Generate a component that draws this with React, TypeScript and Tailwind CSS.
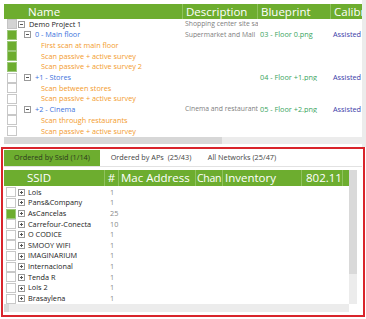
import React from 'react'

const GREEN = 'bg-[#6dad2f]'

type Row = {
  level: number
  check: 'gray' | 'green' | 'none'
  expander?: boolean
  name: string
  desc?: string
  blueprint?: string
  calib?: string
}

const rows: Row[] = [
  { level: 0, check: 'gray', expander: true, name: 'Demo Project 1', desc: 'Shopping center site sample' },
  { level: 1, check: 'green', expander: true, name: '0 - Main floor', desc: 'Supermarket and Mall', blueprint: '03 - Floor 0.png', calib: 'Assisted' },
  { level: 2, check: 'green', name: 'First scan at main floor' },
  { level: 2, check: 'green', name: 'Scan passive + active survey' },
  { level: 2, check: 'green', name: 'Scan passive + active survey 2' },
  { level: 1, check: 'none', expander: true, name: '+1 - Stores', blueprint: '04 - Floor +1.png', calib: 'Assisted' },
  { level: 2, check: 'none', name: 'Scan between stores' },
  { level: 2, check: 'none', name: 'Scan passive + active survey' },
  { level: 1, check: 'none', expander: true, name: '+2 - Cinema', desc: 'Cinema and restaurants', blueprint: '05 - Floor +2.png', calib: 'Assisted' },
  { level: 2, check: 'none', name: 'Scan through restaurants' },
  { level: 2, check: 'none', name: 'Scan passive + active survey' },
]

const networks = [
  { ssid: 'Lois', n: 1 },
  { ssid: 'Pans&Company', n: 1 },
  { ssid: 'AsCancelas', n: 25, on: true },
  { ssid: 'Carrefour-Conecta', n: 10 },
  { ssid: 'O CODICE', n: 1 },
  { ssid: 'SMOOY WIFI', n: 1 },
  { ssid: 'IMAGINARIUM', n: 1 },
  { ssid: 'Internacional', n: 1 },
  { ssid: 'Tenda R', n: 1 },
  { ssid: 'Lois 2', n: 1 },
  { ssid: 'Brasaylena', n: 1 },
]

function Check({ kind }: { kind: 'gray' | 'green' | 'none' }) {
  const fill = kind === 'green' ? 'bg-[#6dad2f] border-[#9cc87a]' : kind === 'gray' ? 'bg-[#d4d4d4] border-[#c4c4c4]' : 'bg-white border-[#c8c8c8]'
  return <div className={`w-[10px] h-[10px] border shrink-0 ${fill}`} />
}

function Expander({ open }: { open: boolean }) {
  return (
    <div className="w-[7px] h-[7px] border border-[#9a9a9a] bg-white relative shrink-0">
      <div className="absolute left-[1px] right-[1px] top-[2px] h-px bg-[#555]" />
      {!open && <div className="absolute top-[1px] bottom-[1px] left-[2px] w-px bg-[#555]" />}
    </div>
  )
}

function HeadCell({ w, children, className = '' }: { w: string; children?: React.ReactNode; className?: string }) {
  return (
    <div
      className={`${w} h-full border-r border-[#8fc25e] flex items-center text-white leading-none whitespace-nowrap overflow-hidden shrink-0 ${className}`}
    >
      {children}
    </div>
  )
}

export default function App() {
  return (
    <div className="w-[366px] h-[319px] bg-white overflow-hidden" style={{ fontFamily: '"Open Sans", "Noto Sans", sans-serif' }}>
      {/* project tree */}
      <div className="flex h-[147px]">
        <div className="w-[362px] pl-[4px] pt-[4px] flex flex-col">
          <div className={`flex h-[16px] ${GREEN} text-[11.5px]`}>
            <HeadCell w="w-[179px]" className="pl-[24px]">Name</HeadCell>
            <HeadCell w="w-[75px]" className="pl-[3px]">Description</HeadCell>
            <HeadCell w="w-[73px]" className="pl-[3px]">Blueprint</HeadCell>
            <HeadCell w="w-[31px]" className="pl-[3px] border-r-0">Calibr</HeadCell>
          </div>
          <div className="flex flex-col">
            {rows.map((r, i) => (
              <div key={i} className="flex h-[10.7px] items-center text-[7.3px] leading-none whitespace-nowrap">
                <div className="w-[179px] flex items-center shrink-0">
                  <div className="w-[3px]" />
                  <Check kind={r.check} />
                  <div style={{ width: 1 + r.level * 6 }} className="shrink-0" />
                  {r.expander ? <Expander open /> : <div className="w-[7px] shrink-0" />}
                  <span className={`ml-[4px] ${r.level === 0 ? 'text-[#222]' : r.level === 1 ? 'text-[#3d73dc]' : 'text-[#f39b2c]'}`}>
                    {r.name}
                  </span>
                </div>
                <div className="w-[75px] overflow-hidden pl-[2px] text-[6.8px] text-[#808080] shrink-0">{r.desc}</div>
                <div className="w-[73px] overflow-hidden pl-[2px] text-[#3aa561] shrink-0">{r.blueprint}</div>
                <div className="w-[31px] overflow-hidden pl-[2px] text-[#3b3ca8] shrink-0">{r.calib}</div>
              </div>
            ))}
          </div>
          <div className="mt-auto mb-[3px] h-[8px] bg-[#ececec] flex">
            <div className="w-[218px] h-full bg-[#d7d7d7]" />
          </div>
        </div>
        <div className="w-[4px] bg-[#ececec]" />
      </div>

      {/* networks panel */}
      <div className="mx-[1px] h-[170px] border-2 border-[#d9242b] flex flex-col pl-[1px]">
        <div className="flex h-[22px] items-stretch text-[7.3px] leading-none border-b border-[#e2e2e2] mr-[1px]">
          <div className={`w-[96px] ${GREEN} flex items-center justify-center text-[#2d3a1e] mt-[1px]`}>Ordered by Ssid (1/14)</div>
          <div className="w-[102px] flex items-center justify-center text-[#444]">Ordered by APs&nbsp;&nbsp;(25/43)</div>
          <div className="w-[80px] flex items-center justify-center text-[#444]">All Networks (25/47)</div>
        </div>
        <div className="flex mt-[3px] flex-1">
          <div className="w-[345px] flex flex-col">
            <div className={`flex h-[16px] ${GREEN} shrink-0 text-[11.5px]`}>
              <HeadCell w="w-[101px]" className="pl-[23px]">SSID</HeadCell>
              <HeadCell w="w-[14px]" className="justify-center">#</HeadCell>
              <HeadCell w="w-[77px]" className="pl-[2px]">Mac Address</HeadCell>
              <HeadCell w="w-[27px]" className="pl-[1px] text-[10.5px] tracking-[-0.3px]">Chan</HeadCell>
              <HeadCell w="w-[79px]" className="pl-[2px]">Inventory</HeadCell>
              <HeadCell w="w-[41px]" className="pl-[4px]">802.11</HeadCell>
              <HeadCell w="w-[6px]" className="border-r-0"></HeadCell>
            </div>
            <div className="flex flex-col pt-[1px]">
              {networks.map((n) => (
                <div key={n.ssid} className="flex h-[10.65px] items-center text-[7.3px] leading-none whitespace-nowrap">
                  <div className="w-[101px] flex items-center shrink-0">
                    <div className="w-[2px]" />
                    <Check kind={n.on ? 'green' : 'none'} />
                    <div className="w-[2px]" />
                    <Expander open={false} />
                    <span className="ml-[3px] text-[#222]">{n.ssid}</span>
                  </div>
                  <div className="w-[14px] text-[#8a8a8a] pl-[5px] shrink-0">{n.n}</div>
                </div>
              ))}
            </div>
            <div className="mt-auto mb-[3px] h-[8px] bg-[#ececec] flex">
              <div className="w-[5px] h-full bg-[#d7d7d7]" />
            </div>
          </div>
          <div className="w-[8px] flex flex-col mb-[11px]">
            <div className="h-[104px] bg-[#d9d9d9]" />
            <div className="flex-1 bg-[#ececec]" />
          </div>
        </div>
      </div>
    </div>
  )
}
